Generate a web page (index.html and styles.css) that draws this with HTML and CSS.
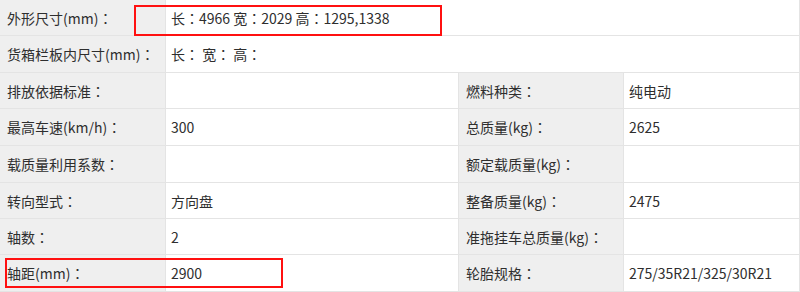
FILE: index.html
```html
<!DOCTYPE html>
<html lang="zh-CN">
<head>
<meta charset="utf-8">
<link rel="stylesheet" href="styles.css">
</head>
<body>
<div class="sheet">
  <div class="spec">
    <div class="lbl">外形尺寸(mm)<span class="c">：</span></div>
    <div class="val wide">长<span class="c">：</span>4966 宽<span class="c">：</span>2029 高<span class="c">：</span>1295,1338</div>

    <div class="lbl">货箱栏板内尺寸(mm)<span class="c">：</span></div>
    <div class="val wide">长<span class="c">：</span> 宽<span class="c">：</span> 高<span class="c">：</span></div>

    <div class="lbl">排放依据标准<span class="c">：</span></div>
    <div class="val"></div>
    <div class="lbl">燃料种类<span class="c">：</span></div>
    <div class="val">纯电动</div>

    <div class="lbl">最高车速(km/h)<span class="c">：</span></div>
    <div class="val">300</div>
    <div class="lbl">总质量(kg)<span class="c">：</span></div>
    <div class="val">2625</div>

    <div class="lbl">载质量利用系数<span class="c">：</span></div>
    <div class="val"></div>
    <div class="lbl">额定载质量(kg)<span class="c">：</span></div>
    <div class="val"></div>

    <div class="lbl">转向型式<span class="c">：</span></div>
    <div class="val">方向盘</div>
    <div class="lbl">整备质量(kg)<span class="c">：</span></div>
    <div class="val">2475</div>

    <div class="lbl">轴数<span class="c">：</span></div>
    <div class="val">2</div>
    <div class="lbl">准拖挂车总质量(kg)<span class="c">：</span></div>
    <div class="val"></div>

    <div class="lbl">轴距(mm)<span class="c">：</span></div>
    <div class="val">2900</div>
    <div class="lbl">轮胎规格<span class="c">：</span></div>
    <div class="val">275/35R21/325/30R21</div>
  </div>
  <div class="mark mark-size"></div>
  <div class="mark mark-wheelbase"></div>
</div>
</body>
</html>
```
FILE: styles.css
```css
html, body {
  margin: 0;
  padding: 0;
  background: #ffffff;
}

.sheet {
  position: relative;
  width: 800px;
  height: 292px;
  overflow: hidden;
}

.spec {
  display: grid;
  grid-template-columns: 166px 293px 165px 1fr;
  grid-template-rows: 36px 37px 36px 37px 37px 36px 36px 37px;
  font-family: "Noto Sans CJK SC", "Microsoft YaHei", sans-serif;
  font-size: 14px;
  color: #2e2e2e;
}

.lbl, .val {
  box-sizing: border-box;
  display: flex;
  align-items: center;
  border-right: 1px solid #e4e4e4;
  border-bottom: 1px solid #e4e4e4;
  white-space: pre;
}

.lbl {
  background: #efefef;
  padding-left: 7px;
}

.val {
  background: #ffffff;
  padding-left: 5px;
}

.c {
  font-family: "Noto Sans CJK TC", "Noto Sans CJK SC", sans-serif;
}

.wide {
  grid-column: 2 / 5;
}

.mark {
  position: absolute;
  box-sizing: border-box;
  border: 2px solid #ff1010;
}

.mark-size {
  left: 134px;
  top: 5px;
  width: 308px;
  height: 31px;
}

.mark-wheelbase {
  left: 5px;
  top: 258px;
  width: 278px;
  height: 30px;
}
```
